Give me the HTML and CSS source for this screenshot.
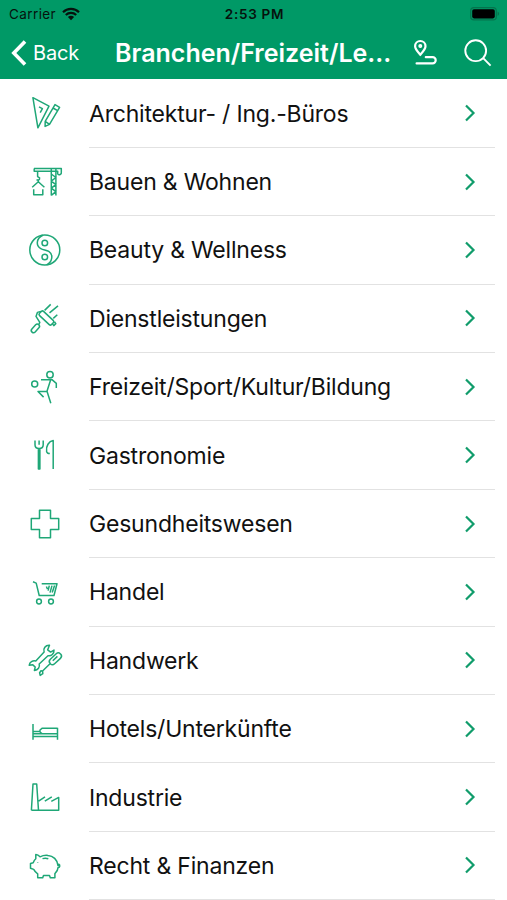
FILE: index.html
```
<!DOCTYPE html>
<html lang="de">
<head>
  <meta charset="utf-8">
  <title>Branchen</title>
  <link rel="stylesheet" href="styles.css">
</head>
<body>

  <div class="header">
    <div class="status-bar">
      <div class="carrier">
        <span>Carrier</span>
        <svg width="18" height="14" viewBox="0 0 18 14">
          <path d="M1 5.2a11.5 11.5 0 0 1 16 0M3.8 8a7.5 7.5 0 0 1 10.4 0" fill="none" stroke="#06120d" stroke-width="2.2"/>
          <path d="M9 13.2 5.9 10.1a4.4 4.4 0 0 1 6.2 0z" fill="#06120d"/>
        </svg>
      </div>
      <div class="time">2:53 PM</div>
      <svg class="battery" width="30" height="14" viewBox="0 0 30 14">
        <rect x=".7" y=".7" width="25.6" height="12.2" rx="3.2" fill="none" stroke="#04744d" stroke-width="1.2"/>
        <rect x="2.2" y="2.2" width="22.6" height="9.2" rx="1.8"/>
        <path d="M27.6 4.6c2 .8 2 3.6 0 4.4z" fill="#04744d"/>
      </svg>
    </div>
    <div class="nav-bar">
      <div class="back">
        <svg width="16" height="26" viewBox="0 0 16 26">
          <path d="M14 1.4 2.8 13 14 24.6"/>
        </svg>
        <span>Back</span>
      </div>
      <div class="title">Branchen/Freizeit/Le...</div>
      <svg class="route" width="26" height="28" viewBox="0 0 26 28">
        <path d="M8.3 15.7C5.5 12.5 3.1 10 3.1 7.2a5.2 5.2 0 0 1 10.4 0c0 2.8-2.4 5.3-5.2 8.5z"/>
        <circle cx="8.3" cy="7.1" r=".9"/>
        <path d="M13.8 18.2h6.8a3.1 3.1 0 0 1 0 6.2H4.6"/>
      </svg>
      <svg class="search" width="28" height="28" viewBox="0 0 28 28">
        <circle cx="11.7" cy="11.7" r="10.4"/>
        <path d="m19.2 19.2 7.4 7.4"/>
      </svg>
    </div>
  </div>

  <div class="list">
    <div class="item">
      <svg class="icon" viewBox="0 0 40 40">
        <path d="M7.9 4.7 24 13.2 12.9 34.8zM14 13.8l3.4 1.8-2.2 4"/>
        <path d="m30 11.6 4.6 2.7-10.1 17.1-4.4 2 .1-5zM28 15l4.6 2.7M20.2 28.4l4.3 3"/>
      </svg>
      <div class="label">Architektur- / Ing.-Büros</div>
      <svg class="arrow" viewBox="0 0 12 18"><path d="m2 1.5 7.5 7.5L2 16.5"/></svg>
    </div>
    <div class="item">
      <svg class="icon" viewBox="0 0 40 40">
        <path d="M9 6.4h27.3v3.8a2 2 0 0 1-3.6 1.6V9.2H9.2V6.4M26.3 6.4v27M30.9 6.4v27M26.3 12l4.6 3.5-4.6 3.6 4.6 3.5-4.6 3.6 4.6 3.5-4.6 3.6"/>
        <path d="M12.6 9.2v5.4l2 1.2c.3 2.4-2 2.8-3 1.6M13.3 19.6v-2M7.2 25.2l6.1-5.4 6.1 5.4M8.7 27.2v5.6h9.1v-5.6"/>
      </svg>
      <div class="label">Bauen &amp; Wohnen</div>
      <svg class="arrow" viewBox="0 0 12 18"><path d="m2 1.5 7.5 7.5L2 16.5"/></svg>
    </div>
    <div class="item">
      <svg class="icon" viewBox="0 0 40 40">
        <circle cx="19.8" cy="20" r="15"/>
        <circle cx="19.8" cy="13" r="2.8"/>
        <circle cx="19.8" cy="27" r="2.8"/>
        <path d="M17.8 5.2c-6.6 3-7.2 10.6-2 13.4 2.6 1.4 5.6 1.3 8 2.8 5 3.4 3.4 10.8-2.2 13.5"/>
      </svg>
      <div class="label">Beauty &amp; Wellness</div>
      <svg class="arrow" viewBox="0 0 12 18"><path d="m2 1.5 7.5 7.5L2 16.5"/></svg>
    </div>
    <div class="item">
      <svg class="icon" viewBox="0 0 40 40">
        <rect x="-2.2" y="-5" width="4.4" height="10" rx="2.2" transform="translate(10.4 30.4) rotate(42)"/>
        <rect x="-8.2" y="-2.9" width="16.4" height="5.8" rx="1.6" transform="translate(21.4 20) rotate(43)"/>
        <path d="m13.6 26.8 1.2-2.4-3.8-6 1.4-4 3.6-1M27.6 25.8l1.2 1.8 2-1.8-1.4-2"/>
        <path d="m19.6 12.4 6.1-6M24.5 14.8l8.5-7M28.3 20.4l4-3.6"/>
      </svg>
      <div class="label">Dienstleistungen</div>
      <svg class="arrow" viewBox="0 0 12 18"><path d="m2 1.5 7.5 7.5L2 16.5"/></svg>
    </div>
    <div class="item">
      <svg class="icon" viewBox="0 0 40 40">
        <circle cx="25" cy="7.7" r="3.2"/>
        <circle cx="9.7" cy="17" r="3"/>
        <path d="M16 12.7h11l4.3 3.6V21M25.6 13 22 24.3l3.8 12M22 24.5h-9l5.6 5.6"/>
      </svg>
      <div class="label">Freizeit/Sport/Kultur/Bildung</div>
      <svg class="arrow" viewBox="0 0 12 18"><path d="m2 1.5 7.5 7.5L2 16.5"/></svg>
    </div>
    <div class="item">
      <svg class="icon" viewBox="0 0 40 40">
        <path d="M10 5.6v4.2c0 5 8.2 5 8.2 0V5.6M14.1 5.6v4.2M13.4 13.6V34h1.5V13.6"/>
        <path d="M28.2 34V5.6c-4.2.6-7.6 5.4-6.6 11 .4 1.6 1.6 2 3.2 2"/>
      </svg>
      <div class="label">Gastronomie</div>
      <svg class="arrow" viewBox="0 0 12 18"><path d="m2 1.5 7.5 7.5L2 16.5"/></svg>
    </div>
    <div class="item">
      <svg class="icon" viewBox="0 0 40 40">
        <path d="M14.5 6.3h11v8.2h8.2v11h-8.2v8.2h-11v-8.2H6.3v-11h8.2z"/>
      </svg>
      <div class="label">Gesundheitswesen</div>
      <svg class="arrow" viewBox="0 0 12 18"><path d="m2 1.5 7.5 7.5L2 16.5"/></svg>
    </div>
    <div class="item">
      <svg class="icon" viewBox="0 0 40 40">
        <path d="m8 9.8 3.2 1.3 3 12.4H29l3-11.7H16.7"/>
        <path d="m21.4 14.5 1 2.5M24.3 13.6l-1.2 5M27 13.6l-2 7M29.6 13.6l-2.4 7"/>
        <circle cx="14" cy="29.5" r="2.4"/>
        <circle cx="26" cy="29.5" r="2.4"/>
      </svg>
      <div class="label">Handel</div>
      <svg class="arrow" viewBox="0 0 12 18"><path d="m2 1.5 7.5 7.5L2 16.5"/></svg>
    </div>
    <div class="item">
      <svg class="icon" viewBox="0 0 40 40">
        <path d="M24.5 5.3c-4-.3-6.7 3.2-5.4 6.8l-8.3 8.8c-3-.7-6.3 1.1-6.6 4.3l3.6-.5 2.4 2.4-.8 3.3c3.7-.2 5.7-3.4 4.8-6.4l8.8-8.3c3.3.7 6.3-2 6-5.6l-3.4 2-2.9-2.3z"/>
        <rect x="-3.1" y="-7" width="6.2" height="14" rx="3" transform="translate(30.4 18.8) rotate(47)"/>
        <path d="m25 23.8-7.4 7.2M32.4 16.4l-4.6 4.4M17.6 30.9l.2 2.8-2.6 1.7-.6-2.6 1.4-2z"/>
      </svg>
      <div class="label">Handwerk</div>
      <svg class="arrow" viewBox="0 0 12 18"><path d="m2 1.5 7.5 7.5L2 16.5"/></svg>
    </div>
    <div class="item">
      <svg class="icon" viewBox="0 0 40 40">
        <path d="M8 15v15.7M32.5 18.7v12M8 27.6h24.5M8 24.8h24.5M8 22.6h7M32.5 19.2H17.3L15 21v2l2.3 1.8"/>
      </svg>
      <div class="label">Hotels/Unterkünfte</div>
      <svg class="arrow" viewBox="0 0 12 18"><path d="m2 1.5 7.5 7.5L2 16.5"/></svg>
    </div>
    <div class="item">
      <svg class="icon" viewBox="0 0 40 40">
        <path d="M6.4 33.3 8 7h3.7l1.8 26.3M6.4 33.3h27.3V20.4l-7.4 4M13.6 24.2l6.4-4.4M19.8 24.2l7-4.4"/>
      </svg>
      <div class="label">Industrie</div>
      <svg class="arrow" viewBox="0 0 12 18"><path d="m2 1.5 7.5 7.5L2 16.5"/></svg>
    </div>
    <div class="item">
      <svg class="icon" viewBox="0 0 40 40">
        <path d="M15 11.8c-1.3-1.3-2.6-2-4.2-2.2v4.2c-1.4 1.2-2 2.4-2.6 3.9l-2.7.7v4.8l3.2 1.2c1 2 2.3 3.3 4 4.4v4h5l.8-2.4h6l.8 2.4h4.6v-4.2c2-1.6 3-3.8 3.2-6.2 2 .2 2.2-2.4.6-3.2.1 1-.2 1.4-.7 1.4-.5-6-5-9.9-10-10.2-3-.3-5.6.2-8 1.4z"/>
        <path d="M17.5 13.6c2-.6 4-.6 5.8.1M12.7 17.4v.6"/>
      </svg>
      <div class="label">Recht &amp; Finanzen</div>
      <svg class="arrow" viewBox="0 0 12 18"><path d="m2 1.5 7.5 7.5L2 16.5"/></svg>
    </div>
  </div>

</body>
</html>
```

FILE: styles.css
```
body {
  margin: 0;
  height: 900px;
  overflow: hidden;
  font-family: Inter, sans-serif;
  background-color: #fff;
  color: #111;
}

.header {
  height: 79px;
  background-color: #009966;
}
.status-bar {
  height: 27px;
  display: grid;
  grid-template-columns: 1fr auto 1fr;
  align-items: center;
  padding: 0 7px 0 9px;
  font-size: 13.5px;
  color: #06120d;
}
.carrier {
  display: flex;
  align-items: center;
  gap: 6px;
  letter-spacing: 0.4px;
}
.time {
  font-weight: 600;
  letter-spacing: 0.7px;
}
.battery {
  justify-self: end;
}

.nav-bar {
  height: 52px;
  display: flex;
  align-items: center;
  color: #fff;
}
.nav-bar svg {
  flex: none;
  fill: none;
  stroke: #fff;
}
.back {
  width: 115px;
  display: flex;
  align-items: center;
  font-size: 20px;
  letter-spacing: -0.2px;
}
.back span {
  margin-top: -1px;
}
.back svg {
  margin-left: 11px;
  margin-right: 6px;
  stroke-width: 3.6;
}
.title {
  width: 277px;
  font-size: 25px;
  font-weight: 600;
  white-space: nowrap;
}
.nav-bar .route {
  margin-left: 20px;
  stroke-width: 2.2;
  stroke-linecap: round;
}
.nav-bar .search {
  margin-left: 26px;
  stroke-width: 1.9;
}

.item {
  height: 68.4px;
  display: flex;
  align-items: center;
  position: relative;
}
.item::after {
  content: "";
  position: absolute;
  left: 89px;
  right: 12px;
  bottom: -0.5px;
  height: 1px;
  background-color: #e2e2e2;
}
.icon {
  width: 40px;
  height: 40px;
  margin-left: 25px;
  margin-right: 24px;
  fill: none;
  stroke: #1fa777;
  stroke-width: 1.5;
  stroke-linejoin: round;
}
.label {
  flex: 1;
  padding-top: 1px;
  font-size: 23px;
  letter-spacing: -0.2px;
  white-space: nowrap;
}
.arrow {
  width: 12px;
  height: 18px;
  margin-right: 31px;
  fill: none;
  stroke: #109c6b;
  stroke-width: 2.2;
}
```
